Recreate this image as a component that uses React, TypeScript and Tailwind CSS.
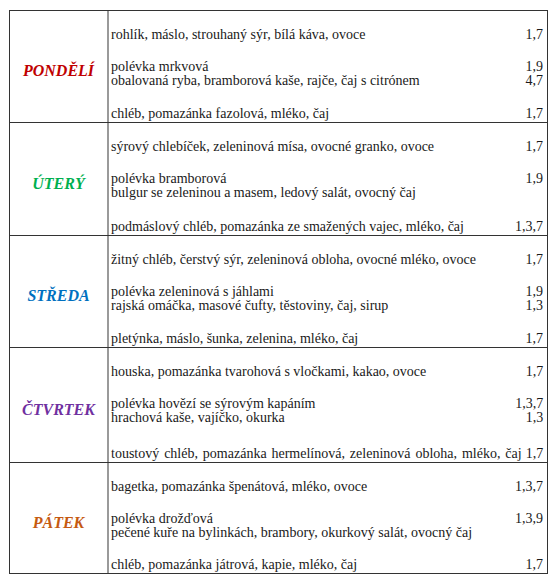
import React from "react";

interface Line {
  text: string;
  code?: string;
  wide?: boolean; // justified line in the original, slightly wider word spacing
}

interface Day {
  name: string;
  color: string;
  height: string;
  breakfast: Line;
  lunch: Line[];
  snack: Line;
}

const days: Day[] = [
  {
    name: "PONDĚLÍ",
    color: "text-[#c00000]",
    height: "h-[112px]",
    breakfast: { text: "rohlík, máslo, strouhaný sýr, bílá káva, ovoce", code: "1,7" },
    lunch: [
      { text: "polévka mrkvová", code: "1,9" },
      { text: "obalovaná ryba, bramborová kaše, rajče, čaj s citrónem", code: "4,7" },
    ],
    snack: { text: "chléb, pomazánka fazolová, mléko, čaj", code: "1,7" },
  },
  {
    name: "ÚTERÝ",
    color: "text-[#00b050]",
    height: "h-[113px]",
    breakfast: { text: "sýrový chlebíček, zeleninová mísa, ovocné granko, ovoce", code: "1,7" },
    lunch: [
      { text: "polévka bramborová", code: "1,9" },
      { text: "bulgur se zeleninou a masem, ledový salát, ovocný čaj" },
    ],
    snack: { text: "podmáslový chléb, pomazánka ze smažených vajec, mléko, čaj", code: "1,3,7" },
  },
  {
    name: "STŘEDA",
    color: "text-[#0070c0]",
    height: "h-[112px]",
    breakfast: { text: "žitný chléb, čerstvý sýr, zeleninová obloha, ovocné mléko, ovoce", code: "1,7" },
    lunch: [
      { text: "polévka zeleninová s jáhlami", code: "1,9" },
      { text: "rajská omáčka, masové čufty, těstoviny, čaj, sirup", code: "1,3" },
    ],
    snack: { text: "pletýnka, máslo, šunka, zelenina, mléko, čaj", code: "1,7" },
  },
  {
    name: "ČTVRTEK",
    color: "text-[#7030a0]",
    height: "h-[115px]",
    breakfast: { text: "houska, pomazánka tvarohová s vločkami, kakao, ovoce", code: "1,7" },
    lunch: [
      { text: "polévka hovězí se sýrovým kapáním", code: "1,3,7" },
      { text: "hrachová kaše, vajíčko, okurka", code: "1,3" },
    ],
    snack: {
      text: "toustový chléb, pomazánka hermelínová, zeleninová obloha, mléko, čaj",
      code: "1,7",
      wide: true,
    },
  },
  {
    name: "PÁTEK",
    color: "text-[#c55a11]",
    height: "h-[111px]",
    breakfast: { text: "bagetka, pomazánka špenátová, mléko, ovoce", code: "1,3,7" },
    lunch: [
      { text: "polévka drožďová", code: "1,3,9" },
      { text: "pečené kuře na bylinkách, brambory, okurkový salát, ovocný čaj" },
    ],
    snack: { text: "chléb, pomazánka játrová, kapie, mléko, čaj", code: "1,7" },
  },
];

function MenuLine({ line }: { line: Line }) {
  return (
    <div className="flex justify-between gap-1 h-[14px] leading-[14px] whitespace-nowrap">
      <span className={line.wide ? "[word-spacing:1.4px]" : ""}>{line.text}</span>
      <span>{line.code}</span>
    </div>
  );
}

export default function App() {
  return (
    <div className="w-[560px] h-[584px] bg-white pt-[10px] pl-[9px] font-['Liberation_Serif','Times_New_Roman',serif]">
      <div className="w-[539px] border-x border-b border-[#333] text-[14px] text-[#1a1a1a]">
        {days.map((day) => (
          <div key={day.name} className={`flex border-t border-[#333] ${day.height}`}>
            <div className="w-[99px] shrink-0 flex items-center justify-center border-r-2 border-[#9a9a9a] pt-[9px]">
              <span className={`font-bold italic text-[16px] ${day.color}`}>{day.name}</span>
            </div>
            <div className="flex-1 pl-[2px] pr-[4px] pt-[17px] pb-[1px] flex flex-col">
              <MenuLine line={day.breakfast} />
              <div className="mt-[18px]">
                {day.lunch.map((l) => (
                  <MenuLine key={l.text} line={l} />
                ))}
              </div>
              <div className="mt-auto">
                <MenuLine line={day.snack} />
              </div>
            </div>
          </div>
        ))}
      </div>
    </div>
  );
}
